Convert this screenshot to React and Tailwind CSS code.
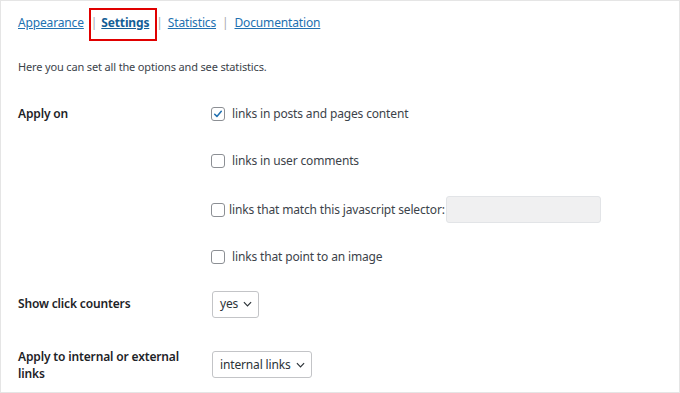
function Check({ checked }) {
  return (
    <span className="w-[14px] h-[14px] shrink-0 rounded-[3px] border border-[#8c8f94] bg-white flex items-center justify-center">
      {checked && (
        <svg viewBox="0 0 20 20" className="w-[16px] h-[16px]">
          <path d="M4.5 10.5 L8.2 14 L15.5 5.5" fill="none" stroke="#2271b1" strokeWidth="2.6" strokeLinecap="round" strokeLinejoin="round" />
        </svg>
      )}
    </span>
  );
}

function Select({ label }) {
  return (
    <div className="h-[27px] inline-flex items-center border border-[#c3c4c7] rounded-[3px] bg-white pl-[7px] pr-[6px] gap-[5px] text-[#2c3338]">
      <span>{label}</span>
      <svg viewBox="0 0 10 6" className="w-[9px] h-[6px]">
        <path d="M1 1 L5 5 L9 1" fill="none" stroke="#2c3338" strokeWidth="1.3" />
      </svg>
    </div>
  );
}

export default function App() {
  return (
    <div className="w-[680px] h-[393px] bg-white border border-[#e5e5e5] text-[12px] tracking-[-0.15px] text-[#3c434a]" style={{ fontFamily: '"Noto Sans", Arial, sans-serif' }}>
      <div className="flex items-center pl-[17px] mt-[4px] h-[35px] text-[#2271b1]">
        <a className="underline">Appearance</a>
        <span className="text-[#a7aaad] mx-[7px]">|</span>
        <span className="relative -ml-[3px]">
          <a className="underline font-bold text-[#135e96]">Settings</a>
          <span className="absolute left-[-12px] right-[-8px] top-[-6px] bottom-[-9px] border-2 border-[#e00000]"></span>
        </span>
        <span className="text-[#a7aaad] ml-[7px] mr-[5px]">|</span>
        <a className="underline">Statistics</a>
        <span className="text-[#a7aaad] mx-[6px]">|</span>
        <a className="underline">Documentation</a>
      </div>
      <p className="pl-[17px] mt-[19px] text-[11px]">Here you can set all the options and see statistics.</p>

      <div className="flex pl-[17px] mt-[28px]">
        <div className="w-[193px] font-semibold text-[#1d2327] pt-[1px]">Apply on</div>
        <div className="flex flex-col">
          <label className="flex items-center gap-[7px] h-[20px]"><Check checked />links in posts and pages content</label>
          <label className="flex items-center gap-[7px] h-[20px] mt-[27px]"><Check />links in user comments</label>
          <label className="flex items-center gap-[4px] h-[20px] mt-[29px]">
            <Check />links that match this javascript selector:
            <span className="-ml-[3px] w-[155px] h-[27px] rounded-[3px] bg-[#f0f0f1] border border-[#e2e4e7]"></span>
          </label>
          <label className="flex items-center gap-[7px] h-[20px] mt-[27px]"><Check />links that point to an image</label>
        </div>
      </div>

      <div className="flex items-center pl-[17px] mt-[24px]">
        <div className="w-[194px] font-semibold text-[#1d2327]">Show click counters</div>
        <Select label="yes" />
      </div>

      <div className="flex items-center pl-[17px] mt-[30px]">
        <div className="w-[194px] font-semibold text-[#1d2327] leading-[17px]">Apply to internal or external<br />links</div>
        <Select label="internal links" />
      </div>
    </div>
  );
}
